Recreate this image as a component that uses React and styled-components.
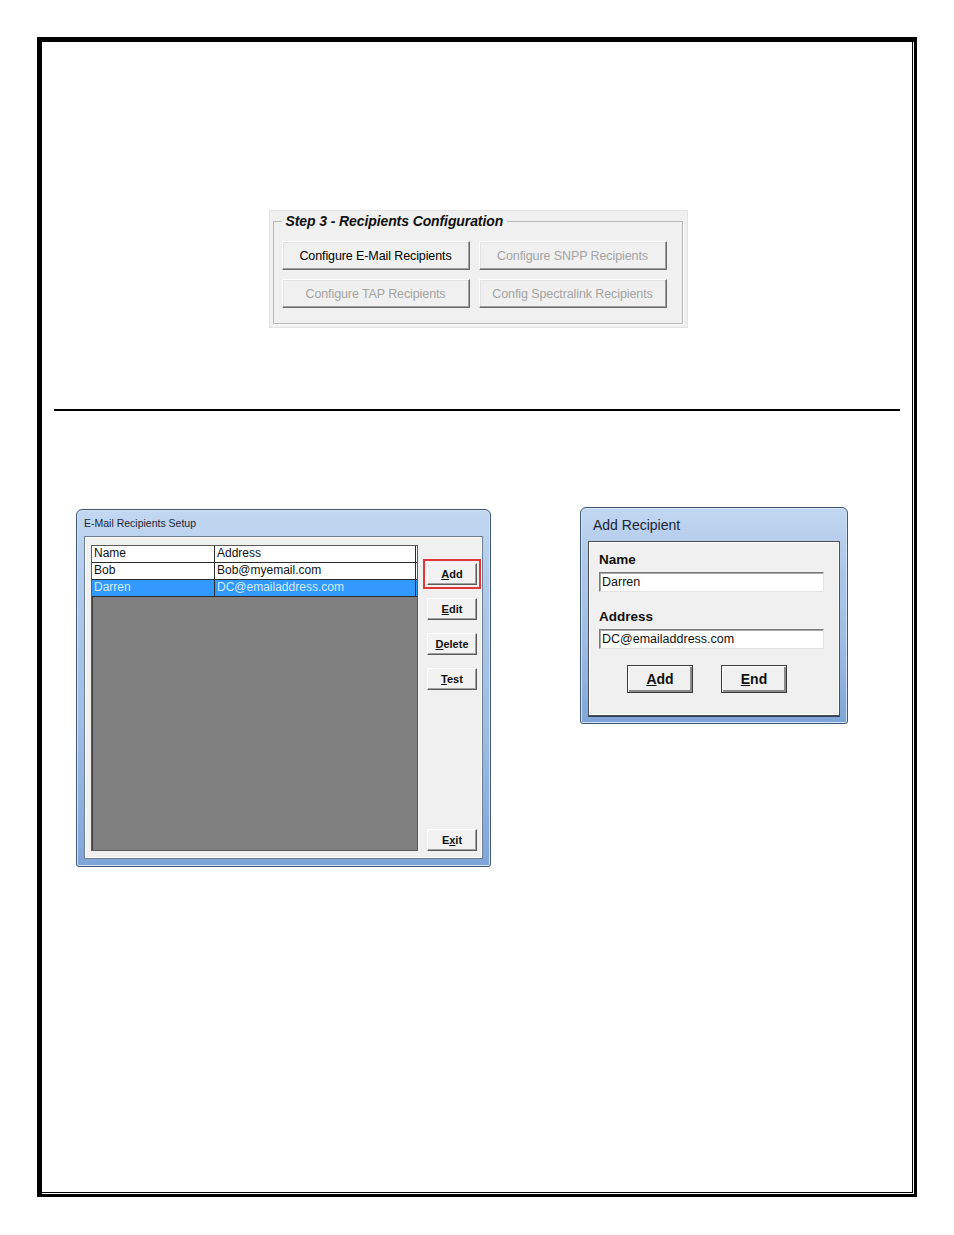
import React from "react";
import styled, { createGlobalStyle } from "styled-components";

const GlobalStyle = createGlobalStyle`
  html, body {
    margin: 0;
    padding: 0;
    background: #ffffff;
  }
  body {
    font-family: 'Liberation Sans', Arial, sans-serif;
  }
`;

const Page = styled.div`
  width: 954px;
  height: 1235px;
  padding: 37px 0 0 37px;
  box-sizing: border-box;
`;

const Frame = styled.div`
  width: 880px;
  height: 1160px;
  box-sizing: border-box;
  border-style: solid;
  border-color: #000;
  border-width: 5px 3px 3px 5px;
  box-shadow: inset -1px -1px 0 #fff, inset -2px -2px 0 #000;
  display: flex;
  flex-direction: column;
`;

/* ---------- Step 3 group box ---------- */

const GroupPanel = styled.div`
  margin: 168px auto 0;
  width: 419px;
  height: 118px;
  box-sizing: border-box;
  padding: 2px 4px 3px 3px;
  background: #f0f0f0;
  border: 1px solid #e4e4e4;
`;

const GroupBox = styled.fieldset`
  margin: 0;
  height: 100%;
  box-sizing: border-box;
  padding: 0 8px 17px 8px;
  border: 1px solid #b8b8b8;
  box-shadow: 1px 1px 0 #ffffff;
`;

const GroupLegend = styled.legend`
  padding: 0 4px;
  font-family: 'Liberation Sans', Arial, sans-serif;
  font-style: italic;
  font-weight: 700;
  font-size: 14px;
  line-height: 16px;
  color: #111;
  letter-spacing: -0.1px;
`;

const ButtonGrid = styled.div`
  margin-top: 12px;
  display: grid;
  grid-template-columns: 188px 188px;
  grid-auto-rows: 29px;
  column-gap: 9px;
  row-gap: 9px;
`;

const ClassicButton = styled.button`
  margin: 0;
  padding: 0;
  background: #f0f0f0;
  border: 1px solid;
  border-color: #ffffff #696969 #696969 #ffffff;
  box-shadow: inset -1px -1px 0 #a0a0a0, inset 1px 1px 0 #e3e3e3;
  font-family: 'Liberation Sans', Arial, sans-serif;
  font-size: 12.5px;
  letter-spacing: -0.1px;
  color: ${(p) => (p.disabled ? "#a3a3a3" : "#000")};
  cursor: default;
`;

const Rule = styled.div`
  margin: 81px 14px 0 12px;
  height: 2px;
  background: #000;
`;

/* ---------- windows ---------- */

const WindowsRow = styled.div`
  margin-top: 96px;
  padding-left: 34px;
  display: flex;
  align-items: flex-start;
  gap: 89px;
`;

const Window = styled.div`
  margin-top: ${(p) => p.$offset || 0}px;
  width: ${(p) => p.$w}px;
  height: ${(p) => p.$h}px;
  box-sizing: border-box;
  border: 1px solid #3f5878;
  border-radius: 6px 6px 3px 3px;
  background: linear-gradient(180deg, #c2d7f0 0%, #abc6e9 30%, #9fbee6 60%, #7fa5d8 100%);
  box-shadow: inset 0 0 0 1px #d3e2f5;
  display: flex;
  flex-direction: column;
  padding: 0 7px 7px;
`;

const TitleBar = styled.div`
  height: ${(p) => p.$h}px;
  display: flex;
  align-items: center;
  padding-left: ${(p) => p.$pad}px;
  font-family: 'Liberation Sans', Arial, sans-serif;
  font-size: ${(p) => p.$size}px;
  color: #1c2436;
  flex-shrink: 0;
`;

const Client = styled.div`
  flex: 1;
  background: #f0f0f0;
  border: 1px solid #6b7f99;
  box-shadow: inset 0 0 0 1px #ffffff;
  display: flex;
  box-sizing: border-box;
`;

/* ---------- e-mail recipients list ---------- */

const ListClient = styled(Client)`
  padding: 8px 5px 7px 6px;
  gap: 9px;
`;

const ListView = styled.div`
  width: 327px;
  background: #808080;
  border: 1px solid #5a5a5a;
  box-shadow: inset 1px 1px 0 #404040;
  display: flex;
  flex-direction: column;
`;

const ListRow = styled.div`
  display: flex;
  height: 17px;
  box-sizing: border-box;
  background: ${(p) => (p.$selected ? "#3399ff" : "#ffffff")};
  border-bottom: 1px solid #2b2b2b;
  color: ${(p) => (p.$selected ? "#d4ecff" : "#111")};
`;

const ListCell = styled.div`
  width: ${(p) => p.$w}px;
  box-sizing: border-box;
  padding-left: 2px;
  border-right: 1px solid #2b2b2b;
  font-family: 'Liberation Sans', Arial, sans-serif;
  font-size: 12px;
  line-height: 15px;
  white-space: nowrap;
  overflow: hidden;
`;

const SideButtons = styled.div`
  display: flex;
  flex-direction: column;
  gap: 13px;
  padding-top: 18px;
`;

const SmallButton = styled.button`
  width: 50px;
  height: 22px;
  margin: 0;
  padding: 0;
  background: #f2f2f2;
  border: 1px solid;
  border-color: #ffffff #5a5a5a #5a5a5a #ffffff;
  box-shadow: inset -1px -1px 0 #a0a0a0;
  font-family: 'Liberation Sans', Arial, sans-serif;
  font-weight: 700;
  font-size: 11px;
  color: #111;
  outline: ${(p) => (p.$highlight ? "2px solid #e2363a" : "none")};
  outline-offset: 2px;
  cursor: default;

  &:last-child {
    margin-top: auto;
  }

  u {
    text-decoration: underline;
  }
`;

/* ---------- add recipient dialog ---------- */

const DialogClient = styled(Client)`
  flex-direction: column;
  padding: 10px 14px 0 10px;
  border-color: #4e4e4e;
  box-shadow: inset 0 0 0 1px #ffffff, 0 1px 0 #2f3f55;
`;

const FieldLabel = styled.div`
  font-family: 'Liberation Sans', Arial, sans-serif;
  font-weight: 700;
  font-size: 13.5px;
  line-height: 16px;
  color: #111;
  margin-top: ${(p) => p.$top || 0}px;
`;

const TextInput = styled.div`
  margin-top: 4px;
  width: 225px;
  height: 20px;
  box-sizing: border-box;
  background: #fff;
  border: 1px solid;
  border-color: #7a7a7a #e3e3e3 #e3e3e3 #7a7a7a;
  box-shadow: inset 1px 1px 0 #a8a8a8;
  padding-left: 2px;
  font-family: 'Liberation Sans', Arial, sans-serif;
  font-size: 12.5px;
  line-height: 18px;
  color: #111;
`;

const DialogButtons = styled.div`
  display: flex;
  gap: 28px;
  margin-top: 16px;
  padding-left: 28px;
`;

const DialogButton = styled.button`
  width: 66px;
  height: 28px;
  margin: 0;
  padding: 0;
  background: #f0f0f0;
  border: 1px solid #3a3a3a;
  box-shadow: inset 1px 1px 0 #ffffff, inset -2px -2px 0 #8a8a8a;
  font-family: 'Liberation Sans', Arial, sans-serif;
  font-weight: 700;
  font-size: 14px;
  color: #111;
  cursor: default;
`;

const recipients = [
  { name: "Bob", address: "Bob@myemail.com" },
  { name: "Darren", address: "DC@emailaddress.com", selected: true },
];

const App = () => (
  <>
    <GlobalStyle />
    <Page>
      <Frame>
        <GroupPanel>
          <GroupBox>
            <GroupLegend>Step 3 - Recipients Configuration</GroupLegend>
            <ButtonGrid>
              <ClassicButton>Configure E-Mail Recipients</ClassicButton>
              <ClassicButton disabled>Configure SNPP Recipients</ClassicButton>
              <ClassicButton disabled>Configure TAP Recipients</ClassicButton>
              <ClassicButton disabled>Config Spectralink Recipients</ClassicButton>
            </ButtonGrid>
          </GroupBox>
        </GroupPanel>

        <Rule />

        <WindowsRow>
          <Window $w={415} $h={358} $offset={2}>
            <TitleBar $h={26} $pad={0} $size={10.5}>E-Mail Recipients Setup</TitleBar>
            <ListClient>
              <ListView>
                <ListRow>
                  <ListCell $w={123}>Name</ListCell>
                  <ListCell $w={201}>Address</ListCell>
                </ListRow>
                {recipients.map((r) => (
                  <ListRow key={r.name} $selected={r.selected}>
                    <ListCell $w={123}>{r.name}</ListCell>
                    <ListCell $w={201}>{r.address}</ListCell>
                  </ListRow>
                ))}
              </ListView>
              <SideButtons>
                <SmallButton $highlight>
                  <u>A</u>dd
                </SmallButton>
                <SmallButton>
                  <u>E</u>dit
                </SmallButton>
                <SmallButton>
                  <u>D</u>elete
                </SmallButton>
                <SmallButton>
                  <u>T</u>est
                </SmallButton>
                <SmallButton>
                  E<u>x</u>it
                </SmallButton>
              </SideButtons>
            </ListClient>
          </Window>

          <Window $w={268} $h={217}>
            <TitleBar $h={33} $pad={5} $size={14}>Add Recipient</TitleBar>
            <DialogClient>
              <FieldLabel>Name</FieldLabel>
              <TextInput>Darren</TextInput>
              <FieldLabel $top={17}>Address</FieldLabel>
              <TextInput>DC@emailaddress.com</TextInput>
              <DialogButtons>
                <DialogButton>
                  <u>A</u>dd
                </DialogButton>
                <DialogButton>
                  <u>E</u>nd
                </DialogButton>
              </DialogButtons>
            </DialogClient>
          </Window>
        </WindowsRow>
      </Frame>
    </Page>
  </>
);

export default App;
